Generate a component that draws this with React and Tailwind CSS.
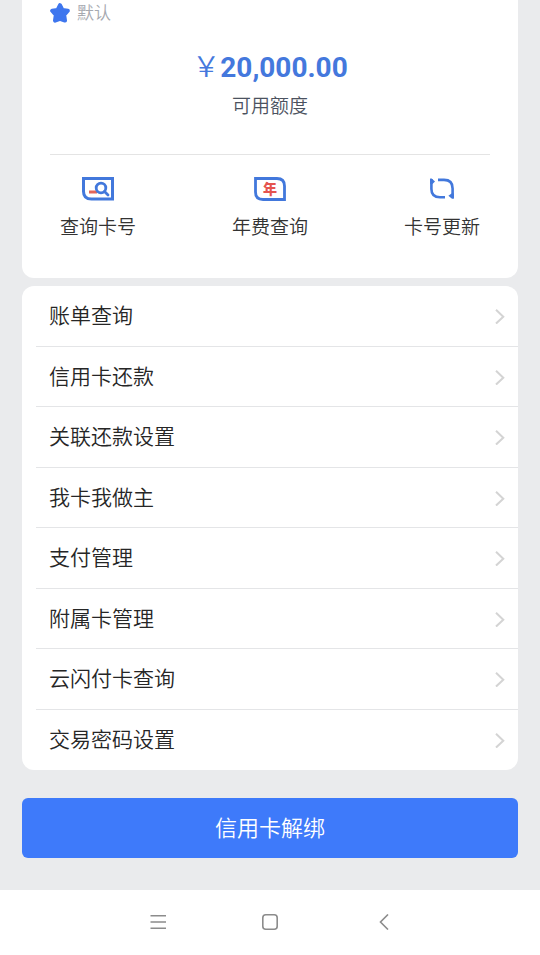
const menuItems = [
  "账单查询",
  "信用卡还款",
  "关联还款设置",
  "我卡我做主",
  "支付管理",
  "附属卡管理",
  "云闪付卡查询",
  "交易密码设置",
];

const StarIcon = () => (
  <svg className="h-6 w-5" viewBox="0 0 20 24" aria-hidden="true">
    <path
      d="M10 5.2 L12.4 9.9 L17.8 10.8 L14.2 15 L15 20.6 L10 18.8 L5 20.6 L5.8 15 L2.2 10.8 L7.6 9.9 Z"
      fill="#3e76ee"
      stroke="#3e76ee"
      strokeWidth="4"
      strokeLinejoin="round"
    />
  </svg>
);

const CardSearchIcon = () => (
  <svg className="h-6 w-8" viewBox="0 0 32 24" fill="none" aria-hidden="true">
    <path
      d="M1.5 1.5 H30.5 V22 H9.5 Q1.5 22 1.5 14.5 Z"
      stroke="#4278dc"
      strokeWidth="3"
    />
    <path d="M7 15 H15" stroke="#e2655a" strokeWidth="3" />
    <circle cx="19" cy="11" r="4.8" stroke="#4278dc" strokeWidth="2.8" />
    <path d="M22.5 14.5 L26 18" stroke="#4278dc" strokeWidth="2.8" strokeLinecap="round" />
  </svg>
);

const AnnualFeeIcon = () => (
  <svg className="h-6 w-8" viewBox="0 0 32 24" fill="none" aria-hidden="true">
    <path
      d="M1.5 1.5 H23 Q30.5 1.5 30.5 9 V22.5 H9 Q1.5 22.5 1.5 15 Z"
      stroke="#4278dc"
      strokeWidth="2.8"
    />
    <text x="16" y="17" textAnchor="middle" fontSize="14" fontWeight="900" fill="#e5544f">
      年
    </text>
  </svg>
);

const RefreshIcon = () => (
  <svg className="h-6 w-8" viewBox="0 0 32 24" fill="none" aria-hidden="true">
    <g stroke="#4278dc" strokeWidth="2.6">
      <path d="M12 2.9 H18 Q26.6 2.9 26.6 11.5 V21" />
      <path d="M19 20.3 H14 Q5.4 20.3 5.4 12 V2" />
    </g>
    <path d="M4.1 1.5 L5.6 1.5 L9 4.6 L6.5 7 L4.1 7 Z" fill="#4278dc" />
    <path d="M27.9 21.8 L26 21.8 L22.4 18.8 L25.5 16.4 L27.9 16.4 Z" fill="#4278dc" />
  </svg>
);

const ChevronIcon = () => (
  <svg className="h-4 w-3" viewBox="0 0 12 16" fill="none" aria-hidden="true">
    <path d="M2 1.8 L9.3 8.8 L2 15.6" stroke="#d4d4d4" strokeWidth="2" />
  </svg>
);

const shortcuts = [
  { label: "查询卡号", Icon: CardSearchIcon },
  { label: "年费查询", Icon: AnnualFeeIcon },
  { label: "卡号更新", Icon: RefreshIcon },
];

const Summary = () => (
  <section className="rounded-b-xl bg-white pb-[38px]">
    <div className="flex items-start gap-[7px] px-7">
      <StarIcon />
      <span className="text-[17px] leading-6 text-[#a6a9b0]">默认</span>
    </div>
    <div className="pt-[26px] text-center">
      <p className="font-[Roboto,'Noto_Sans_CJK_SC',sans-serif] text-[28px] leading-9 font-bold text-[#4478dd]">
        <span className="font-[350]">￥</span>20,000.00
      </p>
      <p className="pt-px text-[19px] leading-9 text-[#4b5260]">可用额度</p>
    </div>
    <div className="mx-7 mt-[31px] border-t border-[#e4e4e4]" />
    <div className="flex justify-between pt-[22px] pr-[38px] pl-[38px]">
      {shortcuts.map(({ label, Icon }) => (
        <button key={label} type="button" className="flex flex-col items-center gap-[11px]">
          <Icon />
          <span className="text-[19px] leading-7 text-[#333]">{label}</span>
        </button>
      ))}
    </div>
  </section>
);

const Menu = () => (
  <ul className="mt-2 overflow-hidden rounded-xl bg-white">
    {menuItems.map((label) => (
      <li key={label} className="group pl-3.5 odd:h-[61px] even:h-[60px]">
        <button
          type="button"
          className="flex h-full w-full items-center justify-between border-b border-[#e4e5e7] pr-3 pl-[13px] group-last:border-b-0"
        >
          <span className="pb-1 text-[21px] leading-8 text-[#262626]">{label}</span>
          <ChevronIcon />
        </button>
      </li>
    ))}
  </ul>
);

const SystemBar = () => (
  <nav className="flex h-[65px] items-center justify-center gap-24 bg-white pb-px text-[#8c8c8c]">
    <button type="button" aria-label="菜单">
      <svg className="size-4" viewBox="0 0 16 16" fill="none" stroke="currentColor" strokeWidth="1.6">
        <path d="M0.5 1.8 H16 M0.5 8 H16 M0.5 14.2 H16" />
      </svg>
    </button>
    <button type="button" aria-label="主页">
      <svg className="size-4" viewBox="0 0 16 16" fill="none" stroke="currentColor" strokeWidth="1.6">
        <rect x="0.8" y="0.8" width="14.4" height="14.4" rx="3" />
      </svg>
    </button>
    <button type="button" aria-label="返回">
      <svg className="size-4" viewBox="0 0 16 16" fill="none" stroke="currentColor" strokeWidth="1.6">
        <path d="M14 0.5 L6.5 8 L14 15.5" />
      </svg>
    </button>
  </nav>
);

export default function App() {
  return (
    <div className="flex min-h-screen flex-col bg-[#eaebed] font-['Noto_Sans_CJK_SC',sans-serif] font-[350]">
      <main className="flex-1 px-[22px] pb-8">
        <Summary />
        <Menu />
        <button
          type="button"
          className="mt-7 h-[60px] w-full rounded-md bg-[#3e7afa] pb-1 text-[22px] text-white"
        >
          信用卡解绑
        </button>
      </main>
      <SystemBar />
    </div>
  );
}
